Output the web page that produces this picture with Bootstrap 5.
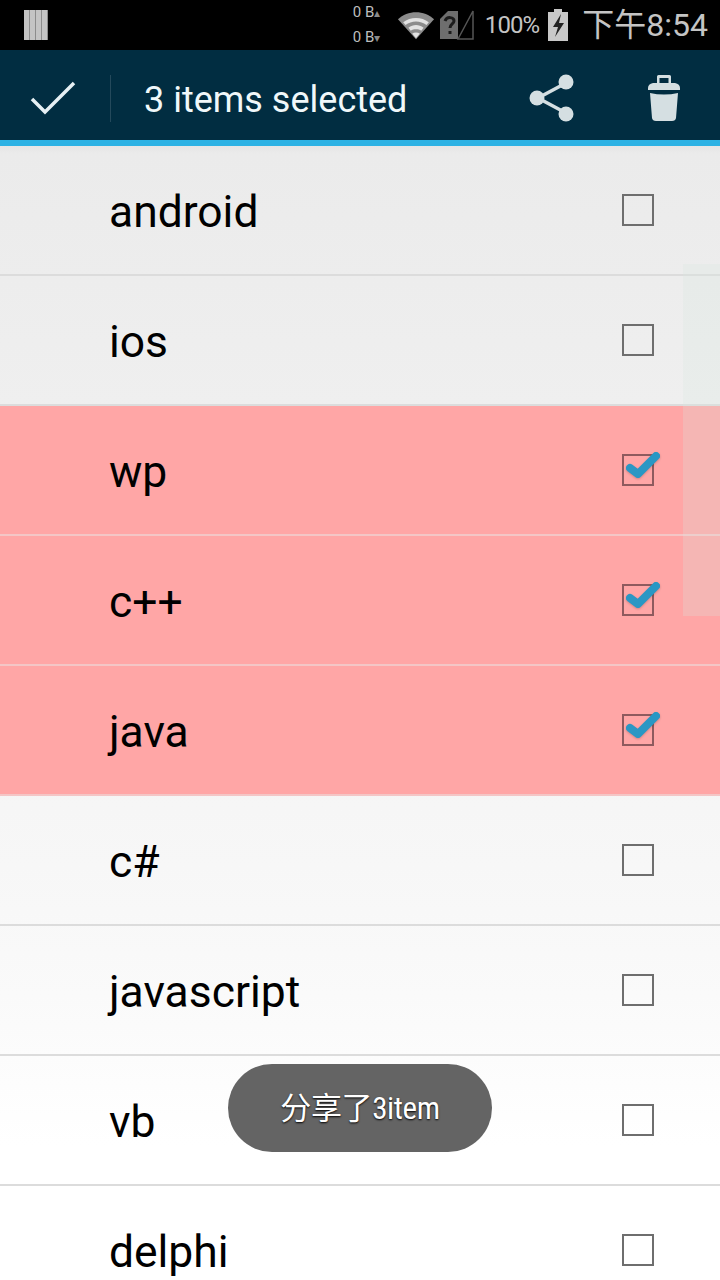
<!DOCTYPE html>
<html lang="zh">
<head>
<meta charset="utf-8">
<title>List</title>
<link rel="stylesheet" href="https://cdn.jsdelivr.net/npm/bootstrap@5.3.0/dist/css/bootstrap.min.css">
<style>
html,body{margin:0;background:#fff;}
body{width:720px;height:1280px;overflow:hidden;position:relative;font-family:Roboto,"Noto Sans CJK SC",sans-serif;color:#000;}
.stat-bar{height:50px;background:#000;color:#c4c4c4;padding-left:22px;padding-right:12px;}
.speed-col{font-size:15px;line-height:24px;width:33px;margin-left:auto;margin-right:11px;white-space:nowrap;color:#bdbdbd;}
.speed-col i{font-style:normal;font-size:12px;color:#8a8a8a;}
.pct{font-size:24px;letter-spacing:-.9px;margin:0 8px 0 10px;line-height:50px;}
.clock{font-size:32px;line-height:50px;margin-left:13px;}
.act-bar{height:90px;background:#012d41;color:#f0f8fa;padding-top:6px;}
.done-btn{width:111px;height:47px;border-right:1px solid #24495b;padding-left:30px;}
.act-title{font-size:36px;margin-left:33px;line-height:79px;padding-top:5px;}
.act-ico-a{margin-left:auto;margin-right:72px;}
.act-ico-b{margin-right:39px;}
.blue-line{height:6px;background:#2db2e4;}
.item-list{background:linear-gradient(#e6e6e6 0,#ebebeb 8px,#efefef 260px,#f7f7f7 720px,#fafafa 850px,#fff 1000px);border-radius:0;}
.item-list .list-group-item{height:130px;background:transparent;border:0;border-bottom:2px solid #dcdcdc;padding:0 66px 0 109px;font-size:44.4px;color:#000;line-height:1;border-radius:0;margin:0;}
.item-list .list-group-item.picked{background:#ffa6a6;border-bottom-color:#f4c6c6;}
.row-label{padding-top:4px;}
.box-tick{width:32px;height:32px;border:2px solid #6e6e6e;position:relative;flex:none;}
.picked .box-tick{border-color:#8e5a5e;}
.box-tick svg{position:absolute;left:0;top:-10px;filter:drop-shadow(0 1px 1px rgba(0,0,0,.2));}
.scroll-shade{position:absolute;left:683px;top:264px;width:37px;height:352px;background:rgba(215,230,225,.25);}
.toast-pill{position:absolute;left:228px;top:1064px;width:264px;height:88px;border-radius:44px;background:#646464;color:#fff;font-size:31px;line-height:90px;text-align:center;font-family:"Roboto Condensed",Roboto,"Noto Sans CJK SC",sans-serif;letter-spacing:-.4px;text-shadow:0 1px 2px #000;}
</style>
</head>
<body>
<div class="stat-bar d-flex align-items-center">
  <svg width="26" height="30" viewBox="0 0 26 30"><rect x="2" y="0" width="24" height="30" fill="#8c8c8c"/><g fill="#c4c4c4"><rect x="2" y="0" width="5" height="30"/><rect x="8" y="0" width="5" height="30"/><rect x="14" y="0" width="5" height="30"/><rect x="20" y="0" width="5" height="30"/></g></svg>
  <div class="speed-col"><div>0 B<i>▴</i></div><div>0 B<i>▾</i></div></div>
  <svg width="38" height="30" viewBox="0 0 40 30"><path d="M1 9C11-1 29-1 39 9L20 30Z" fill="#8c8c8c"/><path d="M6.500 12C14 6 26 6 33.500 12l-2.500 3C25 10 15 10 9 15Z" fill="#e2e2e2"/><path d="M12 18c5-4 11-4 16 0l-2.500 3c-3-2-8-2-11 0Z" fill="#e2e2e2"/><path d="M16 24c2.500-1.500 5.500-1.500 8 0l-4 5Z" fill="#e2e2e2"/></svg>
  <svg width="36" height="32" viewBox="0 0 36 32" class="ms-1"><path d="M1 10 9 2h10v28H1Z" fill="#6e6e6e"/><path d="M19 30 34 2v28Z" fill="none" stroke="#555" stroke-width="1.500"/><path d="M6 12c2-5 9-4 9 0 0 3-4 3-4 7M11 22v3" fill="none" stroke="#1c1c1c" stroke-width="3"/></svg>
  <span class="pct">100%</span>
  <svg width="22" height="32" viewBox="0 0 22 32"><path d="M7 0h8v3h6v29H1V3h6Z" fill="#c8c8c8"/><path d="M14 5 6 18h5l-3 10 9-14h-5Z" fill="#222"/></svg>
  <span class="clock">下午8:54</span>
</div>
<div class="act-bar d-flex align-items-center">
  <div class="done-btn d-flex align-items-center">
    <svg width="46" height="36" viewBox="0 0 46 36"><path d="M2 19 15 32 44 3" fill="none" stroke="#e6f0f4" stroke-width="3.500"/></svg>
  </div>
  <span class="act-title">3 items selected</span>
  <svg class="act-ico-a" width="46" height="48" viewBox="0 0 46 48"><path d="M37 9 9 24 37 39" fill="none" stroke="#d5dfe2" stroke-width="3.500"/><g fill="#d5dfe2"><circle cx="37" cy="8" r="7.500"/><circle cx="8" cy="24" r="7.500"/><circle cx="37" cy="40" r="7.500"/></g></svg>
  <svg class="act-ico-b" width="34" height="48" viewBox="0 0 34 48"><g fill="#d5dfe2"><path d="M10 10V2.500q0-1.500 1.500-1.500h11q1.500 0 1.500 1.500V10h-2.500V4h-9v6Z"/><path d="M1 14q0-4 5-5h22q5 1 5 5v2H1Z"/><path d="M3 19q14 3 28 0l-2 25q-.5 3-4 3H9q-3.500 0-4-3Z"/></g></svg>
</div>
<div class="blue-line"></div>
<div class="list-group item-list">
  <div class="list-group-item d-flex align-items-center justify-content-between"><span class="row-label">android</span><span class="box-tick"></span></div>
  <div class="list-group-item d-flex align-items-center justify-content-between"><span class="row-label">ios</span><span class="box-tick"></span></div>
  <div class="list-group-item picked d-flex align-items-center justify-content-between"><span class="row-label">wp</span><span class="box-tick"><svg width="38" height="36" viewBox="0 0 38 36"><path d="M6 22 14 28 32 10" fill="none" stroke="#2a97c4" stroke-width="8" stroke-linecap="round" stroke-linejoin="round"/></svg></span></div>
  <div class="list-group-item picked d-flex align-items-center justify-content-between"><span class="row-label">c++</span><span class="box-tick"><svg width="38" height="36" viewBox="0 0 38 36"><path d="M6 22 14 28 32 10" fill="none" stroke="#2a97c4" stroke-width="8" stroke-linecap="round" stroke-linejoin="round"/></svg></span></div>
  <div class="list-group-item picked d-flex align-items-center justify-content-between"><span class="row-label">java</span><span class="box-tick"><svg width="38" height="36" viewBox="0 0 38 36"><path d="M6 22 14 28 32 10" fill="none" stroke="#2a97c4" stroke-width="8" stroke-linecap="round" stroke-linejoin="round"/></svg></span></div>
  <div class="list-group-item d-flex align-items-center justify-content-between"><span class="row-label">c#</span><span class="box-tick"></span></div>
  <div class="list-group-item d-flex align-items-center justify-content-between"><span class="row-label">javascript</span><span class="box-tick"></span></div>
  <div class="list-group-item d-flex align-items-center justify-content-between"><span class="row-label">vb</span><span class="box-tick"></span></div>
  <div class="list-group-item d-flex align-items-center justify-content-between"><span class="row-label">delphi</span><span class="box-tick"></span></div>
</div>
<div class="scroll-shade"></div>
<div class="toast-pill">分享了3item</div>
<script src="https://cdn.jsdelivr.net/npm/bootstrap@5.3.0/dist/js/bootstrap.bundle.min.js"></script>
</body>
</html>
